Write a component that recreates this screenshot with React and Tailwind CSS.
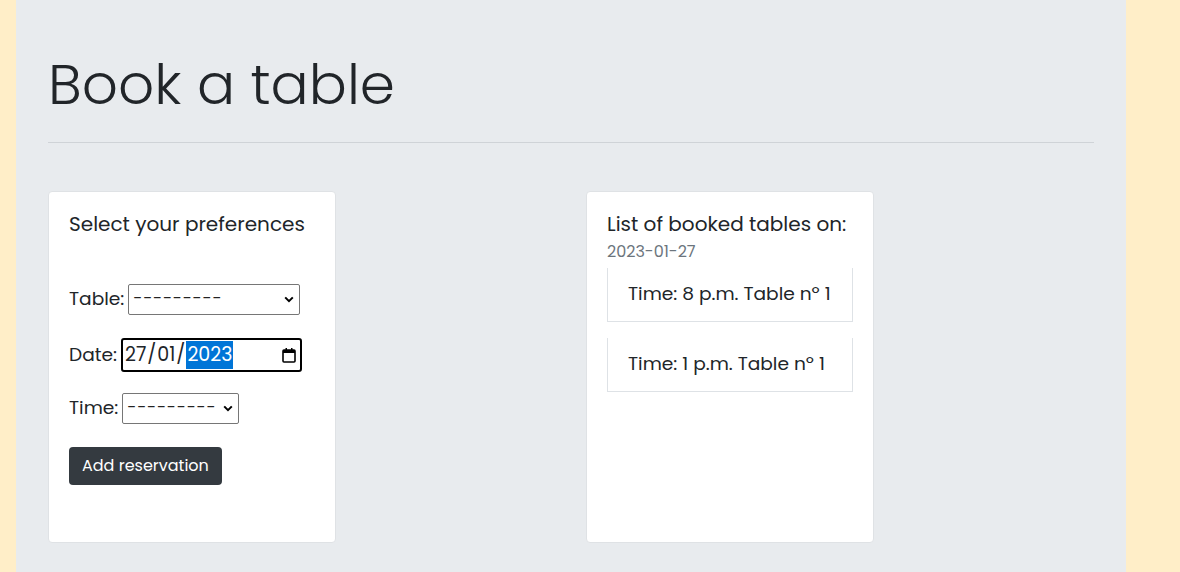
import React from 'react'

const font = { fontFamily: 'Poppins, Inter, "Noto Sans", sans-serif' }

function Chevron() {
  return (
    <svg width="10" height="7" viewBox="0 0 10 7" className="shrink-0">
      <path d="M1.2 1.4 L5 5.2 L8.8 1.4" fill="none" stroke="#000" strokeWidth="2" />
    </svg>
  )
}

function FakeSelect({ width }) {
  return (
    <div className={`flex items-center justify-between gap-[3px] h-[31px] border border-[#767676] rounded-[2px] bg-white pl-[4px] pr-[5px] overflow-hidden ${width}`}>
      <span className="text-[16.5px] text-[#222] tracking-[0.8px] whitespace-nowrap">---------</span>
      <Chevron />
    </div>
  )
}

export default function App() {
  const booked = ['Time: 8 p.m. Table nº 1', 'Time: 1 p.m. Table nº 1']
  return (
    <div className="min-h-screen bg-[#ffeec8] text-[#212529]" style={font}>
      <div className="ml-4 w-[1110px] min-h-screen bg-[#e8ebee] px-8 pt-[51px]">
        <h1 className="text-[56.5px] font-light leading-[1.2] mb-[23px]">Book a table</h1>
        <hr className="border-0 border-t border-[#cfd3d7]" />

        <div className="flex gap-[250px] mt-[48px]">
          <div className="w-[288px] h-[352px] bg-white border border-[#dfe2e5] rounded-[4px] px-[20px] pt-[20px]">
            <h5 className="text-[20px] leading-[1.2] mb-[48px]">Select your preferences</h5>

            <div className="flex items-center gap-[4px] text-[18.6px] mb-[23px]">
              <span>Table:</span>
              <FakeSelect width="w-[172px]" />
            </div>

            <div className="flex items-center gap-[4px] text-[18.6px] mb-[21px]">
              <span>Date:</span>
              <div className="flex items-center justify-between w-[181px] h-[34px] border-2 border-black rounded-[3px] bg-white pl-[2px] pr-[4px]">
                <span className="text-[19px] flex items-center">
                  27<span className="px-[1px]">/</span>01<span className="px-[1px]">/</span>
                  <span className="bg-[#0075d7] text-white px-[1px]">2023</span>
                </span>
                <svg width="14" height="16" viewBox="0 0 14 16">
                  <rect x="1" y="3" width="12" height="12" rx="1" fill="none" stroke="#000" strokeWidth="1.6" />
                  <rect x="1" y="3" width="12" height="3" fill="#000" />
                  <rect x="3.5" y="1" width="1.5" height="3" fill="#000" />
                  <rect x="9" y="1" width="1.5" height="3" fill="#000" />
                </svg>
              </div>
            </div>

            <div className="flex items-center gap-[4px] text-[18.6px] mb-[23px]">
              <span>Time:</span>
              <FakeSelect width="w-[117px]" />
            </div>

            <button className="bg-[#343a40] text-white text-[16px] rounded-[4px] px-[13px] h-[38px]">
              Add reservation
            </button>
          </div>

          <div className="w-[288px] h-[352px] bg-white border border-[#dfe2e5] rounded-[4px] px-[20px] pt-[20px]">
            <h5 className="text-[20px] leading-[1.2]">List of booked tables on:</h5>
            <div className="text-[16px] text-[#6c757d] mt-[4px] leading-[1.5]">2023-01-27</div>
            <ul className="flex flex-col gap-[16px] mt-[4px]">
              {booked.map((b) => (
                <li key={b} className="border-x border-b border-[#dee2e6] px-[20px] h-[54px] flex items-center text-[18.6px]">
                  {b}
                </li>
              ))}
            </ul>
          </div>
        </div>
      </div>
    </div>
  )
}
